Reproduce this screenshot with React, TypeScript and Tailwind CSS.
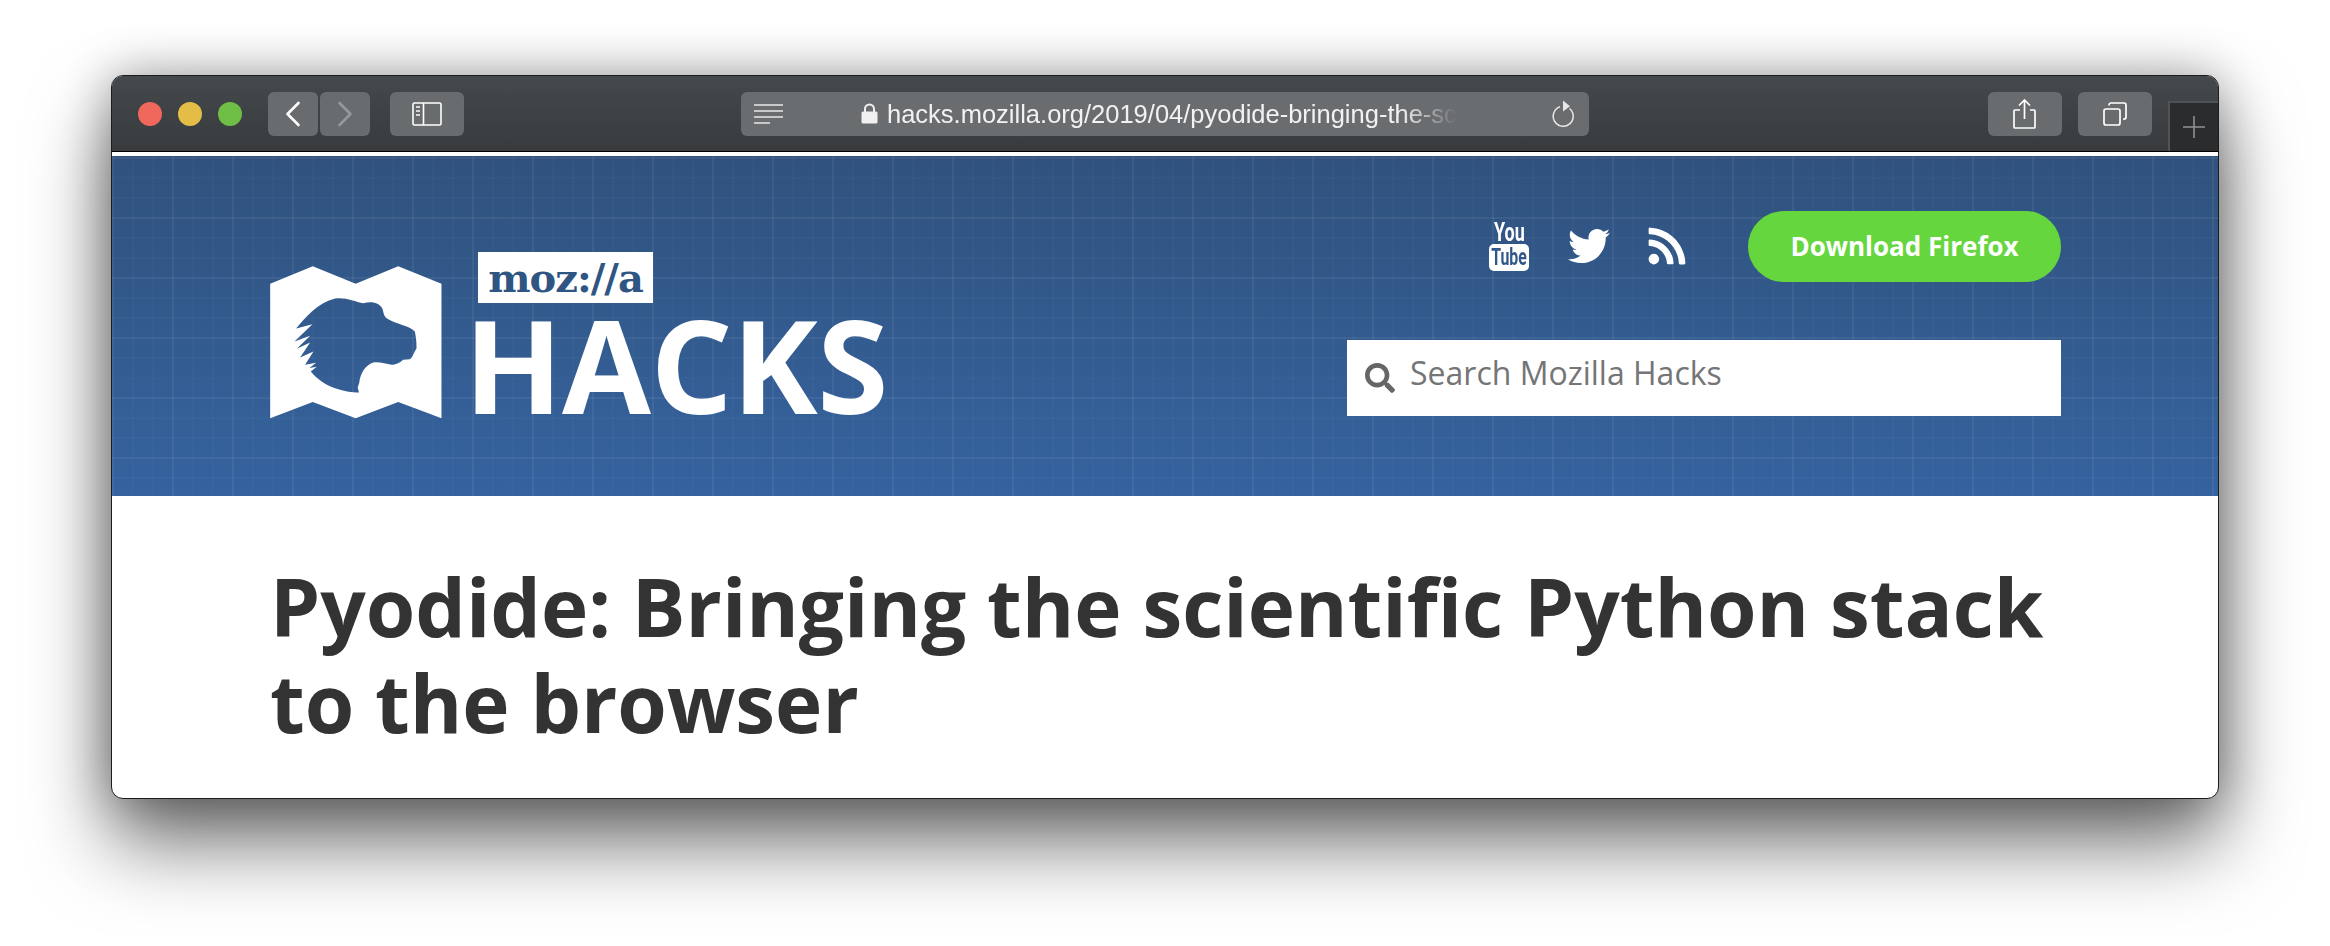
import { FaRss, FaSearch, FaTwitter } from 'react-icons/fa';

function ToolButton({ className, children }: { className: string; children: React.ReactNode }) {
  return (
    <div className={`flex h-[44px] items-center justify-center rounded-[6px] bg-[#696c6f] ${className}`}>
      {children}
    </div>
  );
}

function Toolbar() {
  return (
    <div className="relative flex h-[75px] shrink-0 items-center bg-gradient-to-b from-[#46494b] to-[#383b3e] pl-[26px]">
      <div className="flex gap-[16px]">
        <div className="h-[24px] w-[24px] rounded-full bg-[#f0675c]" />
        <div className="h-[24px] w-[24px] rounded-full bg-[#e4bd47]" />
        <div className="h-[24px] w-[24px] rounded-full bg-[#6fbe45]" />
      </div>
      <ToolButton className="ml-[26px] w-[50px]">
        <svg width="16" height="26" viewBox="0 0 16 26" fill="none" stroke="white" strokeWidth="2.6" strokeLinecap="round" strokeLinejoin="round">
          <path d="M13.5 2 L2.5 13 L13.5 24" />
        </svg>
      </ToolButton>
      <ToolButton className="ml-[2px] w-[50px]">
        <svg width="16" height="26" viewBox="0 0 16 26" fill="none" stroke="#96999b" strokeWidth="2.6" strokeLinecap="round" strokeLinejoin="round">
          <path d="M2.5 2 L13.5 13 L2.5 24" />
        </svg>
      </ToolButton>
      <ToolButton className="ml-[20px] w-[74px]">
        <svg width="30" height="24" viewBox="0 0 30 24" fill="none" stroke="white" strokeWidth="1.6">
          <rect x="1" y="1" width="28" height="22" rx="1.5" />
          <path d="M11.5 1 V23" />
          <path d="M4 5 H8 M4 9 H8 M4 13 H8" strokeWidth="1.8" stroke="#d5d6d7" />
        </svg>
      </ToolButton>

      {/* address bar */}
      <div className="ml-[277px] flex h-[44px] w-[848px] items-center rounded-[6px] bg-[#6a6d70]">
        <svg className="ml-[13px] shrink-0" width="30" height="20" viewBox="0 0 30 20" stroke="#e6e7e7" strokeWidth="1.5">
          <path d="M0 1 H29 M0 7 H29 M0 13 H29 M0 19 H16" />
        </svg>
        <svg className="ml-[77px] shrink-0" width="17" height="21" viewBox="0 0 17 21">
          <path d="M4 9 V6 a4.5 4.5 0 0 1 9 0 V9" fill="none" stroke="#f0f0f0" strokeWidth="2" />
          <rect x="0.5" y="8.5" width="16" height="12" rx="1.5" fill="#f0f0f0" />
        </svg>
        <div className="ml-[9px] whitespace-nowrap font-['Liberation_Sans',sans-serif] text-[25.5px] leading-[44px] text-[#f2f2f2] [mask-image:linear-gradient(to_right,black_90%,transparent_100%)]">
          hacks.mozilla.org/2019/04/pyodide-bringing-the-sc
        </div>
        <svg className="ml-auto mr-[13px] shrink-0" width="24" height="28" viewBox="0 0 24 28" fill="none" stroke="#e8e8e8" strokeWidth="1.5">
          <path d="M17.5 8.5 A10 10 0 1 1 8 6.8" />
          <path d="M11 0.5 L18 6.3 L11 11.5 Z" fill="#e8e8e8" stroke="none" />
        </svg>
      </div>

      <ToolButton className="ml-[399px] w-[74px]">
        <svg width="24" height="30" viewBox="0 0 24 30" fill="none" stroke="white" strokeWidth="1.7">
          <path d="M7 11 H2 a1 1 0 0 0 -1 1 V28 a1 1 0 0 0 1 1 H21 a1 1 0 0 0 1 -1 V12 a1 1 0 0 0 -1 -1 H17" />
          <path d="M11.5 20 V2 M6 6.5 L11.5 1 L17 6.5" />
        </svg>
      </ToolButton>
      <ToolButton className="ml-[16px] w-[74px]">
        <svg width="24" height="24" viewBox="0 0 24 24" fill="none" stroke="white" strokeWidth="1.7">
          <rect x="1" y="7" width="16" height="16" rx="2" />
          <path d="M6 3.5 V3 a2 2 0 0 1 2 -2 H21 a2 2 0 0 1 2 2 V15 a2 2 0 0 1 -2 2 H20" />
        </svg>
      </ToolButton>

      {/* new tab */}
      <div className="ml-auto flex h-[50px] w-[50px] items-center justify-center self-end border-l-2 border-t-2 border-[#515457] bg-[#2a2c2e]">
        <svg width="22" height="22" viewBox="0 0 22 22" stroke="#909293" strokeWidth="1.6">
          <path d="M11 0 V22 M0 11 H22" />
        </svg>
      </div>
    </div>
  );
}

function MapLogo() {
  return (
    <svg className="mt-[14px] shrink-0" width="172" height="153" viewBox="30 15 516 460">
      <path
        fillRule="evenodd"
        fill="white"
        d="M30 68 L158 16 L287 68 L415 16 L545 68 V473 L415 424 L287 473 L158 424 L30 473 Z
           M108 203 C135 170 175 125 225 113 C255 108 285 122 310 127 C335 120 360 125 368 145 C372 160 372 168 385 175 C405 188 450 195 465 212 C470 240 470 250 470 262 C462 275 458 290 450 295 L430 297 C420 305 410 312 395 312 C375 310 345 298 330 310 C310 322 300 345 298 365 L293 380 L297 395 C255 395 190 380 152 332 L170 318 L148 322 L168 306 L135 312 L160 272 L120 290 L150 245 L110 264 L150 225 L103 242 L157 190 Z"
      />
    </svg>
  );
}

function YouTubeMark() {
  return (
    <div className="flex w-[40px] flex-col items-center">
      <div className="h-[20px] scale-x-[.72] font-['Roboto',sans-serif] text-[25px] font-bold leading-[20px] text-white">You</div>
      <div className="mt-[1px] flex h-[27px] w-[40px] items-center justify-center overflow-hidden rounded-[5px] bg-white">
        <span className="scale-x-[.66] font-['Roboto',sans-serif] text-[24px] font-bold leading-[27px] text-[#32588a]">Tube</span>
      </div>
    </div>
  );
}

function SiteHeader() {
  return (
    <div className="flex h-[340px] shrink-0 justify-between bg-[linear-gradient(rgba(255,255,255,.04)_2px,transparent_2px),linear-gradient(90deg,rgba(255,255,255,.04)_2px,transparent_2px),linear-gradient(rgba(255,255,255,.016)_2px,transparent_2px),linear-gradient(90deg,rgba(255,255,255,.016)_2px,transparent_2px),linear-gradient(#30527d,#35639f)] pl-[158px] pr-[157px] [background-size:60px_60px,60px_60px,20px_20px,20px_20px,100%_100%] [background-position:0_1px,0_0,0_1px,0_0,0_0]">
      <div className="flex pt-[96px]">
        <MapLogo />
        <div className="ml-[33px]">
          <div className="ml-[3px] flex h-[51px] w-[175px] items-center justify-center bg-white font-['DejaVu_Serif',serif] text-[40px] font-bold tracking-[-1px] text-[#2f5583]">
            moz://a
          </div>
          <div className="-ml-[11px] mt-[4px] h-[115px] font-['Open_Sans',sans-serif] text-[129px] font-bold leading-[115px] tracking-[-0.6px] text-white">HACKS</div>
        </div>
      </div>

      <div className="flex w-[714px] flex-col items-end pt-[55px]">
        <div className="flex h-[71px] items-center">
          <YouTubeMark />
          <FaTwitter className="ml-[39px] -translate-y-[1px] text-white" size={42} />
          <FaRss className="ml-[36px] -translate-y-[1px] text-white" size={42} />
          <div className="ml-[60px] flex h-[71px] w-[313px] items-center justify-center rounded-full bg-[#66d63f] font-['Open_Sans',sans-serif] text-[26px] font-bold text-white">
            Download Firefox
          </div>
        </div>
        <div className="mt-[58px] flex h-[76px] w-[714px] items-center bg-white pl-[18px]">
          <FaSearch className="text-[#666666]" size={30} />
          <span className="ml-[15px] pb-[11px] font-['Open_Sans',sans-serif] text-[32px] text-[#757575]">Search Mozilla Hacks</span>
        </div>
      </div>
    </div>
  );
}

export default function App() {
  return (
    <div className="h-[946px] w-[2330px] overflow-hidden bg-white pl-[111px] pt-[75px]">
      <div className="flex h-[724px] w-[2108px] flex-col overflow-hidden rounded-[12px] border border-[#1c1c1c] bg-white shadow-[0_44px_80px_rgba(0,0,0,0.56),0_0_50px_rgba(0,0,0,0.32)]">
        <Toolbar />
        <div className="h-[5px] shrink-0 border-t border-black bg-white" />
        <SiteHeader />
        <h1 className="pl-[158px] pr-[120px] pt-[62px] font-['Open_Sans',sans-serif] text-[80px] font-bold leading-[96px] text-[#333333]">
          Pyodide: Bringing the scientific Python stack to the browser
        </h1>
      </div>
    </div>
  );
}
